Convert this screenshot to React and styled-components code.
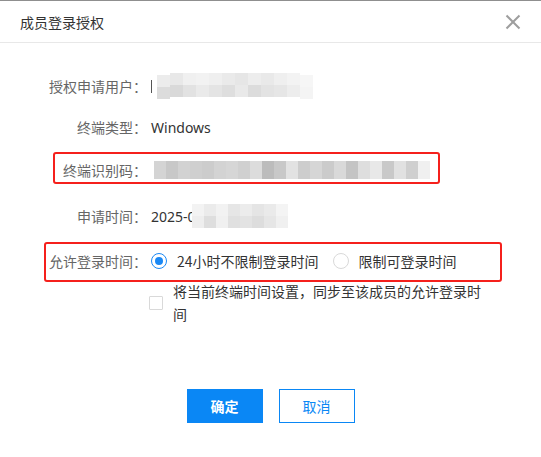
import React from "react";
import styled, { createGlobalStyle } from "styled-components";

const Global = createGlobalStyle`
  html, body { margin: 0; padding: 0; background: #fff; }
  body { font-family: "Noto Sans", "Noto Sans CJK SC", sans-serif; font-size: 14px; color: #333; }
  * { box-sizing: border-box; }
`;

const Modal = styled.div`
  position: relative;
  width: 541px;
  height: 457px;
  background: #fff;
  border-top: 1px solid #8f8f8f;
`;

const Header = styled.div`
  height: 42px;
  display: flex;
  align-items: center;
  justify-content: space-between;
  padding: 0 20px 0 20px;
  border-bottom: 1px solid #e8e8e8;
`;

const Title = styled.div`
  font-family: "Noto Sans CJK SC", sans-serif;
  font-size: 14px;
  color: #333;
`;

const Close = styled.button`
  border: 0;
  background: none;
  padding: 0;
  width: 16px;
  height: 16px;
  display: flex;
  cursor: pointer;
`;

const Body = styled.div`
  display: flex;
  flex-direction: column;
  padding-top: 30px;
`;

const Row = styled.div`
  display: grid;
  grid-template-columns: 147px 1fr;
  column-gap: 4px;
  align-items: center;
  height: 24px;
  margin-top: ${(p) => p.$top || 0}px;
`;

const Label = styled.div`
  text-align: right;
  font-family: "Noto Sans CJK SC", sans-serif;
  color: #666;
  white-space: nowrap;
`;

const Value = styled.div`
  display: flex;
  align-items: center;
  color: #333;
  font-family: "Noto Sans", "Noto Sans CJK SC", sans-serif;
  white-space: nowrap;
`;

const Mosaic = styled.div`
  display: flex;
  margin-left: ${(p) => p.$offset || 0}px;
  filter: blur(0.6px);
`;

const Column = styled.div`
  display: flex;
  flex-direction: column;
  margin-top: ${(p) => p.$shift || 0}px;
`;

const Cell = styled.div`
  width: ${(p) => p.$w || 12}px;
  height: ${(p) => p.$h || 12}px;
  background: ${(p) => p.$shade};
`;

const Caret = styled.span`
  display: inline-block;
  width: 1px;
  height: 13px;
  background: #555;
`;

const Radios = styled.div`
  display: flex;
  align-items: center;
  gap: 14px;
`;

const RadioItem = styled.label`
  display: flex;
  align-items: center;
  gap: 10px;
  font-family: "Noto Sans CJK SC", sans-serif;
  color: #333;
`;

const RadioDot = styled.span`
  width: 16px;
  height: 16px;
  border-radius: 50%;
  border: ${(p) => (p.$on ? "1.5px solid #1a88f5" : "1px solid #d9d9d9")};
  display: flex;
  align-items: center;
  justify-content: center;
  background: #fff;
  &::after {
    content: "";
    width: 8px;
    height: 8px;
    border-radius: 50%;
    background: ${(p) => (p.$on ? "#1a88f5" : "transparent")};
  }
`;

const SyncRow = styled.div`
  display: flex;
  align-items: center;
  gap: 10px;
  margin: 7px 0 0 149px;
`;

const Checkbox = styled.span`
  width: 14px;
  height: 14px;
  border: 1px solid #d9d9d9;
  border-radius: 1px;
  background: #fff;
  flex: none;
`;

const SyncText = styled.div`
  width: 315px;
  line-height: 23px;
  font-family: "Noto Sans CJK SC", sans-serif;
  color: #333;
`;

const Footer = styled.div`
  display: flex;
  justify-content: center;
  gap: 16px;
  margin-top: 63px;
`;

const Button = styled.button`
  width: 76px;
  height: 34px;
  font-family: "Noto Sans CJK SC", sans-serif;
  font-size: 14px;
  font-weight: ${(p) => (p.$primary ? 700 : 400)};
  border: 1px solid #0a87f5;
  background: ${(p) => (p.$primary ? "#0a87f5" : "#fff")};
  color: ${(p) => (p.$primary ? "#fff" : "#0a87f5")};
  padding: 0;
  cursor: pointer;
`;

const Annotation = styled.div`
  position: absolute;
  left: ${(p) => p.$x}px;
  top: ${(p) => p.$y}px;
  width: ${(p) => p.$w}px;
  height: ${(p) => p.$h}px;
  border: 2px solid #f5201c;
  border-radius: 3px;
  pointer-events: none;
`;

const userCells = [
  ["#ececec", "#dcdcdc"],
  ["#e8e8e8", "#d9d9d9"],
  ["#f0f0f0", "#e2e2e2"],
  ["#f2f2f2", "#eaeaea"],
  ["#efefef", "#e4e4e4"],
  ["#eaeaea", "#dedede"],
  ["#e6e6e6", "#e9e9e9"],
  ["#ededed", "#dcdcdc"],
  ["#e9e9e9", "#e3e3e3"],
  ["#efefef", "#e6e6e6"],
  ["#f3f3f3", "#ededed"],
  ["#f6f6f6", "#f4f4f4"],
];

const idCells = [
  "#d4d4d4", "#c8c8c8", "#d2d2d2", "#cfcfcf", "#cccccc", "#d3d3d3", "#d6d6d6",
  "#d0d0d0", "#dcdcdc", "#bcbcbc", "#c8c8c8", "#e2e2e2", "#cdcdcd", "#d6d6d6",
  "#cbcbcb", "#d9d9d9", "#c4c4c4", "#dedede", "#e8e8e8", "#c9c9c9", "#e1e1e1",
  "#cfcfcf", "#f0f0f0",
];

const timeCells = [
  ["#f3f3f3", "#eeeeee"],
  ["#ebebeb", "#dedede"],
  ["#f2f2f2", "#f0f0f0"],
  ["#e6e6e6", "#e0e0e0"],
  ["#ececec", "#e3e3e3"],
  ["#e5e5e5", "#dddddd"],
  ["#eaeaea", "#e6e6e6"],
  ["#f4f4f4", "#f0f0f0"],
];

function CloseIcon() {
  return (
    <svg width="16" height="16" viewBox="0 0 16 16">
      <path d="M1.5 1.5 L14.5 14.5 M14.5 1.5 L1.5 14.5" stroke="#9e9e9e" strokeWidth="2" fill="none" />
    </svg>
  );
}

export default function App() {
  return (
    <>
      <Global />
      <Modal>
        <Header>
          <Title>成员登录授权</Title>
          <Close aria-label="关闭">
            <CloseIcon />
          </Close>
        </Header>
        <Body>
          <Row>
            <Label>授权申请用户：</Label>
            <Value>
              <Caret />
              <Mosaic $offset={5}>
                {userCells.map((c, i) => (
                  <Column key={i} $shift={i === 0 || i === 11 ? 2 : 0}>
                    {c.map((s, j) => (
                      <Cell key={j} $w={13} $h={12} $shade={s} />
                    ))}
                  </Column>
                ))}
              </Mosaic>
            </Value>
          </Row>
          <Row $top={18}>
            <Label>终端类型：</Label>
            <Value>Windows</Value>
          </Row>
          <Row $top={19}>
            <Label>终端识别码：</Label>
            <Value>
              <Mosaic $offset={3}>
                {idCells.map((s, i) => (
                  <Column key={i}>
                    <Cell $w={12} $h={18} $shade={s} />
                  </Column>
                ))}
              </Mosaic>
            </Value>
          </Row>
          <Row $top={22}>
            <Label>申请时间：</Label>
            <Value>
              2025-0
              <Mosaic $offset={-4}>
                {timeCells.map((c, i) => (
                  <Column key={i}>
                    {c.map((s, j) => (
                      <Cell key={j} $w={12} $h={12} $shade={s} />
                    ))}
                  </Column>
                ))}
              </Mosaic>
            </Value>
          </Row>
          <Row $top={21}>
            <Label>允许登录时间：</Label>
            <Radios>
              <RadioItem>
                <RadioDot $on />
                24小时不限制登录时间
              </RadioItem>
              <RadioItem>
                <RadioDot />
                限制可登录时间
              </RadioItem>
            </Radios>
          </Row>
          <SyncRow>
            <Checkbox />
            <SyncText>将当前终端时间设置，同步至该成员的允许登录时间</SyncText>
          </SyncRow>
          <Footer>
            <Button $primary>确定</Button>
            <Button>取消</Button>
          </Footer>
        </Body>
        <Annotation $x={53} $y={151} $w={387} $h={32} />
        <Annotation $x={44} $y={241} $w={458} $h={40} />
      </Modal>
    </>
  );
}
